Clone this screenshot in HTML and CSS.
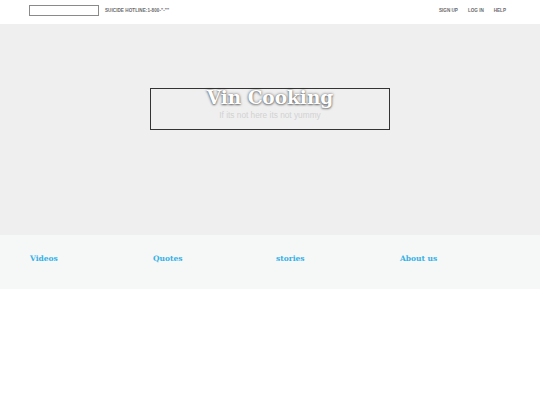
FILE: index.html
```html
<!DOCTYPE html>
<html>
<head>
<meta charset="utf-8">
<link rel="stylesheet" href="styles.css">
</head>
<body>
<header class="topbar">
  <div class="left">
    <input class="search" type="text">
    <span class="hotline">SUICIDE HOTLINE:1-800-"-""</span>
  </div>
  <nav class="links">
    <a>SIGN UP</a>
    <a>LOG IN</a>
    <a>HELP</a>
  </nav>
</header>
<section class="hero">
  <div class="hero-box">
    <h1 class="title">Vin Cooking</h1>
    <p class="tagline">If its not here its not yummy</p>
  </div>
</section>
<section class="cats">
  <a class="cat">Videos</a>
  <a class="cat">Quotes</a>
  <a class="cat">stories</a>
  <a class="cat">About us</a>
</section>
</body>
</html>
```
FILE: styles.css
```css
* { box-sizing: border-box; }
html, body { margin: 0; padding: 0; background: #fff; }
body { font-family: "Liberation Sans", Arial, sans-serif; width: 540px; }

.topbar {
  height: 24px;
  display: flex;
  align-items: center;
  justify-content: space-between;
  padding: 0 34px 3px 29px;
  background: #fff;
}
.left { display: flex; align-items: center; gap: 6px; }
.search {
  width: 70px;
  height: 11px;
  margin: 0;
  padding: 0;
  border: 1px solid #8a8a8a;
  background: #fff;
  border-radius: 0;
}
.hotline {
  font-size: 4.6px;
  font-weight: bold;
  color: #6a6a6a;
  letter-spacing: 0.05px;
}
.links { display: flex; gap: 10px; }
.links a {
  font-size: 4.6px;
  font-weight: bold;
  color: #6a6a6a;
}

.hero {
  height: 211px;
  background: #efefef;
  display: flex;
  justify-content: center;
  padding-top: 64px;
}
.hero-box {
  width: 240px;
  height: 42px;
  border: 1px solid #333;
  text-align: center;
}
.title {
  margin: 0;
  font-family: "DejaVu Serif", serif;
  font-weight: bold;
  font-size: 18.5px;
  line-height: 18px;
  color: #fff;
  text-shadow: 0 0 3px rgba(0,0,0,0.55), 0 1px 2px rgba(0,0,0,0.4);
}
.tagline {
  margin: 3px 0 0;
  font-size: 8.3px;
  line-height: 10px;
  color: #d2d2d2;
}

.cats {
  height: 54px;
  background: #f6f7f7;
  display: grid;
  grid-template-columns: 123px 123px 124px 123px;
  padding: 19px 0 0 30px;
  align-content: start;
}
.cat {
  font-family: "DejaVu Serif", serif;
  font-weight: bold;
  font-size: 7.5px;
  color: #35b1e6;
}
```
